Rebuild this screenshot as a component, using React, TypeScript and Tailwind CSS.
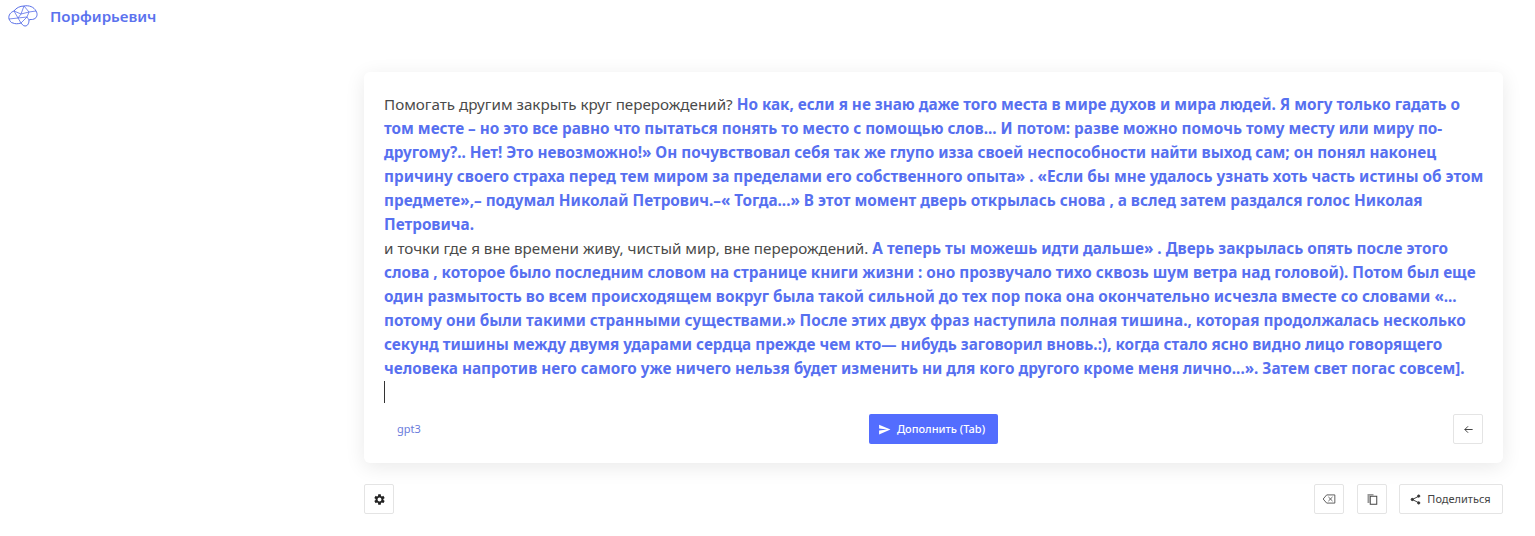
import React from "react";

const Box = ({ children }: { children: React.ReactNode }) => (
  <button className="flex h-[30px] w-[30px] items-center justify-center rounded-[2px] border border-[#e4e4e4] bg-white text-[#333]">{children}</button>
);

export default function App() {
  return (
    <div className="min-h-[536px] bg-white font-['Noto_Sans',sans-serif]">
      <header className="flex h-[34px] items-center pl-[8px]">
        <svg width="30" height="22" viewBox="0 0 30 22" fill="none" stroke="#5a70e8" strokeWidth="1" strokeLinejoin="round" className="-mt-[2px]">
          <path d="M1 14 C0 10 3 7 6 6 C8 3 12 1 16 1 C21 0 26 2 28 6 C30 9 29 13 26 14 C24 15 22 14 21 15 C21 18 20 21 17 21 C15 21 14 19 13 18 C10 19 7 19 5 18 C3 18 2 16 1 14 Z" />
          <path d="M6 6 L13 9 L16 1 M13 9 L21 7 L28 6 M21 7 L16 1 M13 9 L10 13 L1 14 M10 13 L13 18 M10 13 L19 12 L21 15 M19 12 L21 7 M19 12 L13 18 M6 6 L10 13" strokeWidth="0.8" />
        </svg>
        <span className="ml-[12px] -mt-[2px] text-[15.1px] font-semibold text-[#5b72ee]">Порфирьевич</span>
      </header>

      <main className="ml-[364px] mr-[32px] mt-[38px]">
        <section className="h-[391px] rounded-[6px] bg-white px-[20px] pt-[20px] shadow-[0_4px_20px_rgba(0,0,0,0.09)]">
          <div className="-mr-[4px] text-[15.2px] leading-[24px] text-[#4a4a4a]">
            <p>
              Помогать другим закрыть круг перерождений?{" "}
              <b className="text-[15.3px] font-bold text-[#5770f0]">Но как, если я не знаю даже того места в мире духов и мира людей. Я могу только гадать о том месте – но это все равно что пытаться понять то место с помощью слов... И потом: разве можно помочь тому месту или миру по-другому?.. Нет! Это невозможно!» Он почувствовал себя так же глупо изза своей неспособности найти выход сам; он понял наконец причину своего страха перед тем миром за пределами его собственного опыта» . «Если бы мне удалось узнать хоть часть истины об этом предмете»,– подумал Николай Петрович.–« Тогда...» В этот момент дверь открылась снова , а вслед затем раздался голос Николая Петровича.</b>
            </p>
            <p>
              и точки где я вне времени живу, чистый мир, вне перерождений.{" "}
              <b className="text-[15.3px] font-bold text-[#5770f0]">А теперь ты можешь идти дальше» . Дверь закрылась опять после этого слова , которое было последним словом на странице книги жизни : оно прозвучало тихо сквозь шум ветра над головой). Потом был еще один размытость во всем происходящем вокруг была такой сильной до тех пор пока она окончательно исчезла вместе со словами «... потому они были такими странными существами.» После этих двух фраз наступила полная тишина., которая продолжалась несколько секунд тишины между двумя ударами сердца прежде чем кто— нибудь заговорил вновь.:), когда стало ясно видно лицо говорящего человека напротив него самого уже ничего нельзя будет изменить ни для кого другого кроме меня лично...». Затем свет погас совсем].</b>
            </p>
            <div className="mt-[1px] h-[22px] w-px bg-[#333]" />
          </div>
          <div className="mt-[11px] flex items-center justify-between">
            <a className="w-[50px] pl-[13px] text-[11px] text-[#6a7bdc]">gpt3</a>
            <button className="ml-[-20px] flex h-[30px] w-[129px] items-center justify-center gap-[6px] rounded-[2px] bg-[#536dfe] pr-[4px] text-[11px] font-medium text-white">
              <svg width="13" height="13" viewBox="0 0 24 24" fill="white"><path d="M2 21 L23 12 L2 3 V10 L17 12 L2 14 Z" /></svg>
              Дополнить (Tab)
            </button>
            <Box>
              <svg width="11" height="11" viewBox="0 0 24 24" fill="none" stroke="#333" strokeWidth="2"><path d="M21 12 H4 M11 5 L4 12 L11 19" /></svg>
            </Box>
          </div>
        </section>

        <div className="mt-[21px] flex items-center">
          <Box>
            <svg width="13" height="13" viewBox="0 0 24 24" fill="#222"><path d="M19.14 12.94c.04-.3.06-.61.06-.94 0-.32-.02-.64-.07-.94l2.03-1.58c.18-.14.23-.41.12-.61l-1.92-3.32c-.12-.22-.37-.29-.59-.22l-2.39.96c-.5-.38-1.03-.7-1.62-.94l-.36-2.54c-.04-.24-.24-.41-.48-.41h-3.84c-.24 0-.43.17-.47.41l-.36 2.54c-.59.24-1.13.57-1.62.94l-2.39-.96c-.22-.08-.47 0-.59.22L2.74 8.87c-.12.21-.08.47.12.61l2.03 1.58c-.05.3-.09.63-.09.94s.02.64.07.94l-2.03 1.58c-.18.14-.23.41-.12.61l1.92 3.32c.12.22.37.29.59.22l2.39-.96c.5.38 1.03.7 1.62.94l.36 2.54c.05.24.24.41.48.41h3.84c.24 0 .44-.17.47-.41l.36-2.54c.59-.24 1.13-.56 1.62-.94l2.39.96c.22.08.47 0 .59-.22l1.92-3.32c.12-.22.07-.47-.12-.61l-2.01-1.58zM12 15.6c-1.98 0-3.6-1.62-3.6-3.6s1.62-3.6 3.6-3.6 3.6 1.62 3.6 3.6-1.62 3.6-3.6 3.6z" /></svg>
          </Box>
          <div className="ml-auto flex items-center">
            <div className="mr-[13px]">
              <Box>
                <svg width="14" height="12" viewBox="0 0 24 20" fill="none" stroke="#555" strokeWidth="1.6" strokeLinejoin="round"><path d="M8 3 H22 V17 H8 L2 10 Z M11 6.5 L18 13.5 M18 6.5 L11 13.5" /></svg>
              </Box>
            </div>
            <div className="mr-[12px]">
              <Box>
                <svg width="12" height="12" viewBox="0 0 24 24"><path d="M3 2 H15 V5 H7 V20 H3 Z" fill="#999" /><rect x="8.5" y="6.5" width="13" height="16" fill="white" stroke="#444" strokeWidth="2" /></svg>
              </Box>
            </div>
            <button className="flex h-[30px] w-[104px] items-center justify-center gap-[6px] rounded-[2px] border border-[#e4e4e4] bg-white pr-[1px] text-[11px] text-[#444]">
              <svg width="11" height="11" viewBox="0 0 24 24" fill="#333" stroke="#333" strokeWidth="2"><path d="M19 5 L5 12 L19 19" fill="none" /><circle cx="19" cy="4.5" r="2.5" /><circle cx="5" cy="12" r="2.5" /><circle cx="19" cy="19.5" r="2.5" /></svg>
              Поделиться
            </button>
          </div>
        </div>
      </main>
    </div>
  );
}
